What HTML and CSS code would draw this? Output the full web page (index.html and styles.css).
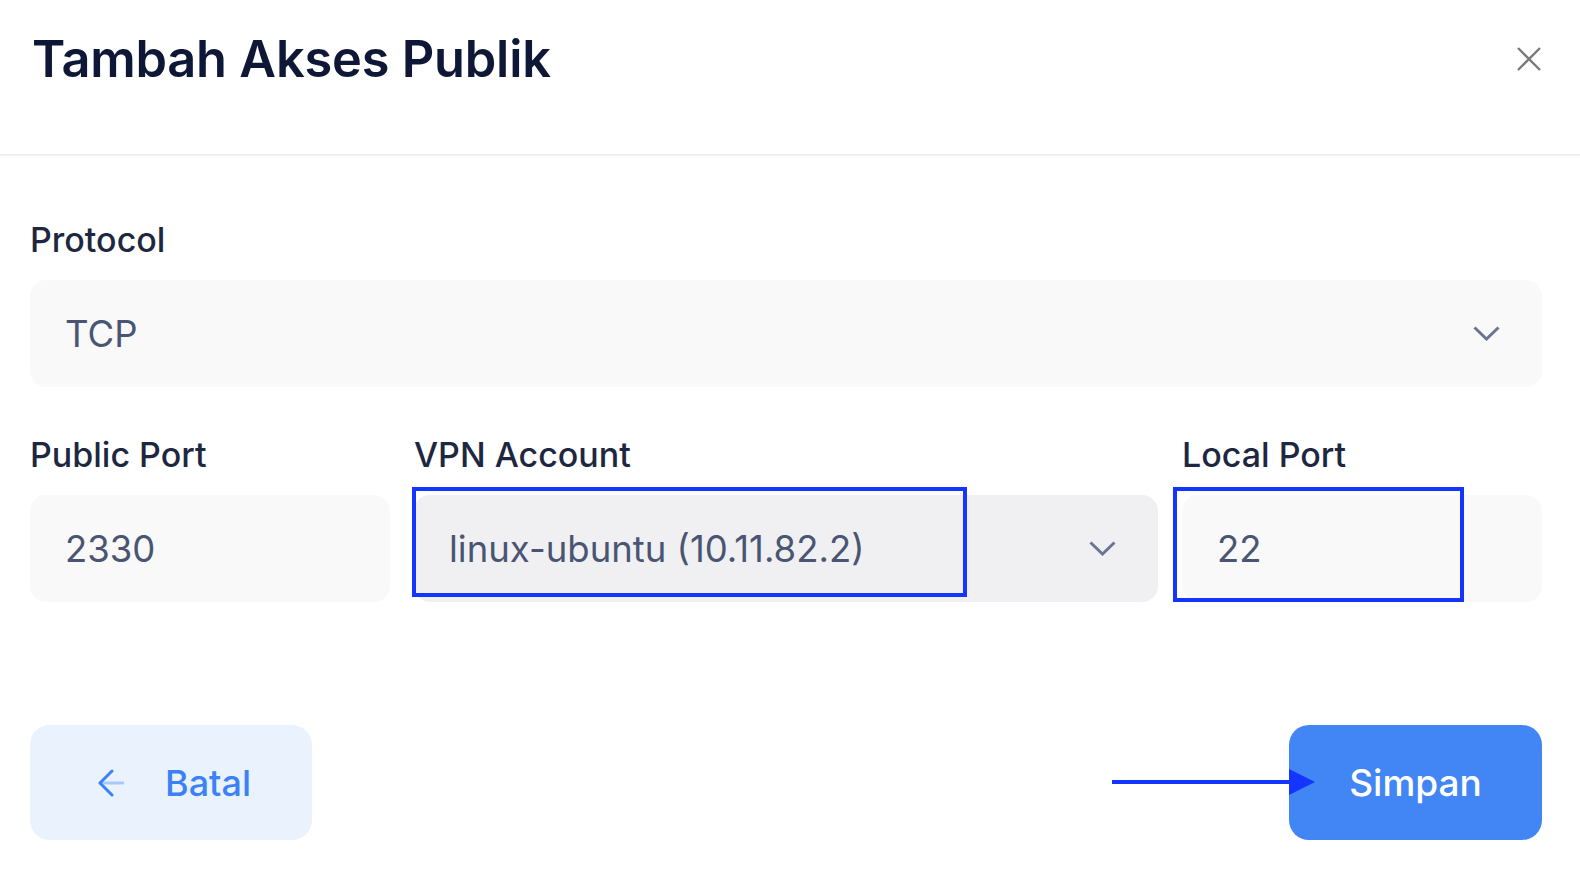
FILE: index.html
```html
<!DOCTYPE html>
<html lang="id">
<head>
<meta charset="utf-8">
<title>Tambah Akses Publik</title>
<link rel="stylesheet" href="styles.css">
</head>
<body>
<div class="modal">
  <header class="modal-header">
    <h1 class="title">Tambah Akses Publik</h1>
    <button class="close" aria-label="Tutup">
      <svg width="24" height="24" viewBox="0 0 24 24"><path d="M1 1 L23 23 M23 1 L1 23" stroke="#7a7a7a" stroke-width="2.4" fill="none"/></svg>
    </button>
  </header>
  <main class="modal-body">
    <div class="field">
      <label class="label">Protocol</label>
      <div class="control select">
        <span class="value">TCP</span>
        <svg class="chev" width="27" height="15" viewBox="0 0 27 15"><polyline points="1.5,1.5 13.5,13 25.5,1.5" stroke="#6b7592" stroke-width="3" fill="none"/></svg>
      </div>
    </div>
    <div class="row">
      <div class="field col-3">
        <label class="label">Public Port</label>
        <div class="control"><span class="value">2330</span></div>
      </div>
      <div class="field col-6">
        <label class="label">VPN Account</label>
        <div class="control select dark">
          <span class="value">linux-ubuntu (10.11.82.2)</span>
          <svg class="chev" width="27" height="15" viewBox="0 0 27 15"><polyline points="1.5,1.5 13.5,13 25.5,1.5" stroke="#6b7592" stroke-width="3" fill="none"/></svg>
          <span class="mark mark-vpn"></span>
        </div>
      </div>
      <div class="field col-3">
        <label class="label">Local Port</label>
        <div class="control"><span class="value">22</span>
          <span class="mark mark-local"></span>
        </div>
      </div>
    </div>
    <div class="actions">
      <button class="btn btn-cancel">
        <svg width="26" height="28" viewBox="0 0 26 28"><path d="M2 14 H25" stroke="#a9c8fb" stroke-width="3" stroke-linecap="round" fill="none"/><path d="M14 2 L2 14 L14 26" stroke="#3b82f6" stroke-width="3" stroke-linecap="round" stroke-linejoin="round" fill="none"/></svg>
        <span>Batal</span>
      </button>
      <button class="btn btn-save">
        <span>Simpan</span>
        <svg class="pointer" width="204" height="26" viewBox="0 0 204 26"><path d="M0 13 H180" stroke="#1434ff" stroke-width="4" fill="none"/><polygon points="177,0 203,13 177,26" fill="#1434ff"/></svg>
      </button>
    </div>
  </main>
</div>
</body>
</html>
```
FILE: styles.css
```css
* { box-sizing: border-box; }
html, body { margin: 0; background: #ffffff; }
body { font-family: Inter, "Noto Sans", sans-serif; color: #1e2740; }

.modal-header {
  height: 156px;
  padding: 29px 39px 0 32px;
  display: flex;
  align-items: flex-start;
  justify-content: space-between;
  border-bottom: 2px solid #f0f0f0;
}
.title {
  margin: 0;
  font-size: 50.5px;
  line-height: 60px;
  font-weight: 600;
  color: #0e1836;
  letter-spacing: -0.2px;
}
.close {
  margin-top: 18px;
  padding: 0;
  border: 0;
  background: none;
  width: 24px;
  height: 24px;
  display: block;
}
.close svg { display: block; }

.modal-body { padding: 64px 38px 0 30px; }

.field { display: flex; flex-direction: column; }
.label {
  font-size: 34px;
  line-height: 40px;
  font-weight: 500;
  color: #1e2740;
  margin: 0 0 20px 0;
}
.control {
  position: relative;
  height: 107px;
  border-radius: 16px;
  background: #f9f9f9;
  display: flex;
  align-items: center;
  padding: 0 42px 0 35px;
}
.control.dark { background: #f0f0f2; }
.select { justify-content: space-between; }
.value {
  font-size: 36.5px;
  font-weight: 400;
  color: #4a5573;
}
.chev { display: block; flex: none; }

.row {
  margin-top: 48px;
  display: grid;
  grid-template-columns: repeat(12, 1fr);
  column-gap: 24px;
}
.col-3 { grid-column: span 3; }
.col-6 { grid-column: span 6; }

.mark {
  position: absolute;
  border: 4px solid #1434ff;
}
.mark-vpn { left: -2px; top: -8px; width: 555px; height: 110px; }
.mark-local { left: -9px; top: -8px; width: 291px; height: 115px; }

.actions {
  margin-top: 123px;
  display: flex;
  justify-content: space-between;
  align-items: center;
}
.btn {
  position: relative;
  height: 115px;
  border: 0;
  border-radius: 20px;
  font-family: Inter, "Noto Sans", sans-serif;
  font-size: 36px;
  font-weight: 500;
  display: flex;
  align-items: center;
  padding: 0;
}
.btn-cancel {
  width: 282px;
  background: #eaf2fe;
  color: #3b82f6;
  padding-left: 68px;
  gap: 41px;
}
.btn-cancel svg { display: block; }
.btn-save {
  width: 253px;
  background: #4285f4;
  color: #ffffff;
  justify-content: center;
  font-size: 37px;
}
.pointer {
  position: absolute;
  left: -177px;
  top: 44px;
}
```
